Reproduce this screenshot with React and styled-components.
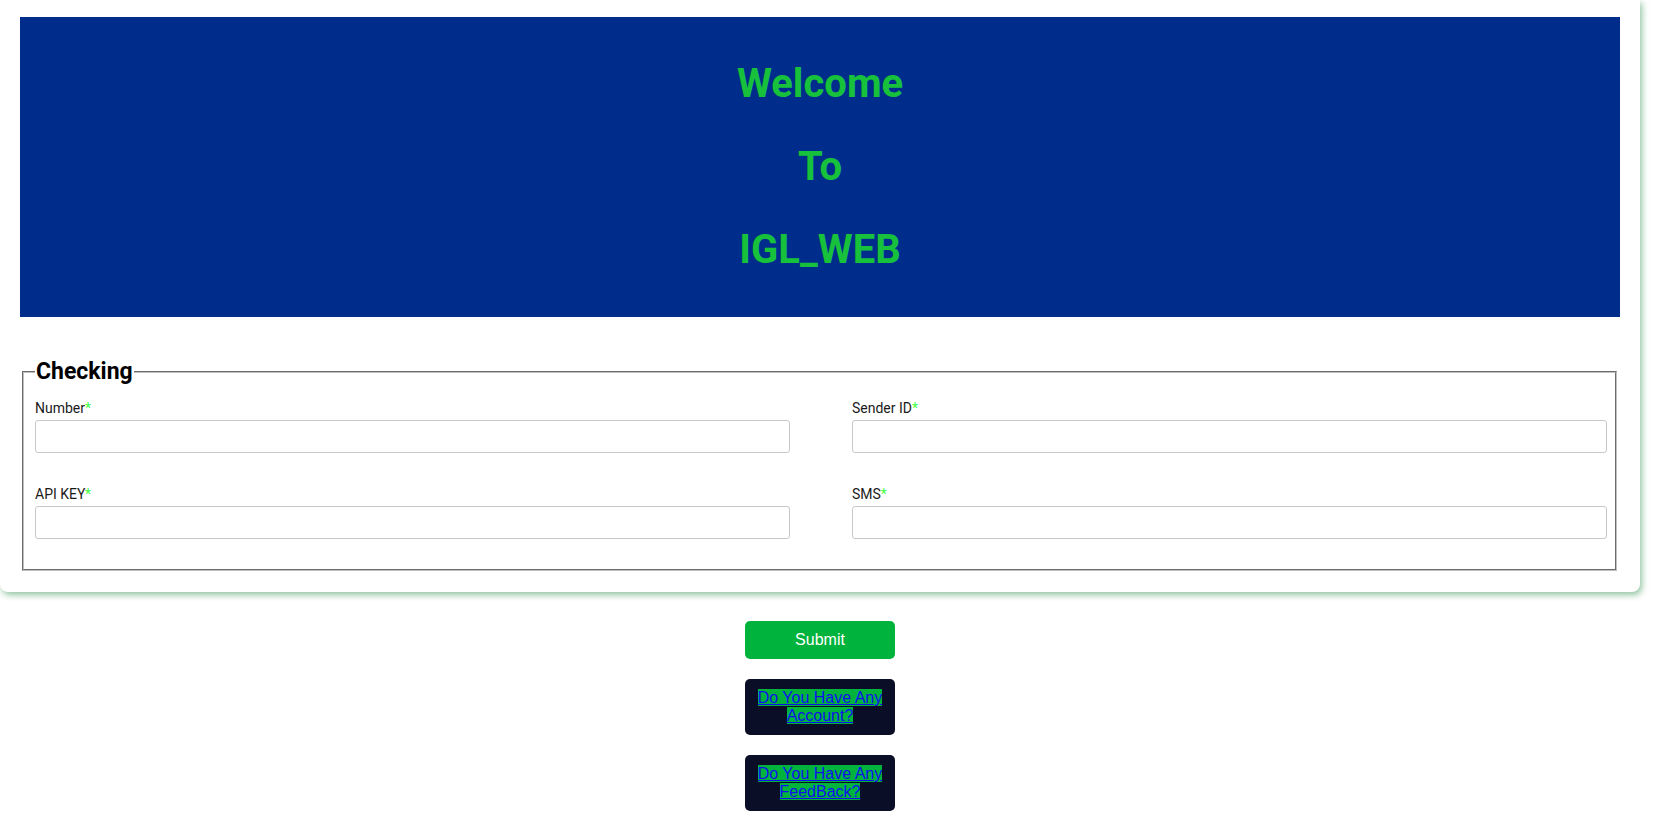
import React from "react";
import styled, { createGlobalStyle } from "styled-components";

const Global = createGlobalStyle`
  html, body { margin: 0; padding: 0; background: #ffffff; }
  body { font-family: Roboto, "Liberation Sans", Arial, sans-serif; }
  * { box-sizing: border-box; }
`;

const Page = styled.div`
  width: 1640px;
  display: flex;
  flex-direction: column;
  align-items: stretch;
  padding-bottom: 9px;
`;

const Card = styled.div`
  background: #ffffff;
  border-radius: 0 0 8px 8px;
  box-shadow: 2px 3px 6px rgba(40, 140, 70, 0.5);
  padding: 17px 20px 21px 20px;
  display: flex;
  flex-direction: column;
  gap: 42px;
`;

const Banner = styled.div`
  background: #002d8c;
  height: 300px;
  display: flex;
  flex-direction: column;
  align-items: center;
  justify-content: center;
  gap: 35px;
`;

const BannerLine = styled.h1`
  margin: 0;
  font-family: Roboto, sans-serif;
  font-weight: 700;
  font-size: 40px;
  line-height: 48px;
  color: #17c13c;
`;

const Fieldset = styled.fieldset`
  margin: 0 3px 0 2px;
  border: 2px groove #c0c0c0;
  padding: 13px 8px 30px 11px;
  min-width: 0;
`;

const Legend = styled.legend`
  font-family: Roboto, sans-serif;
  font-weight: 700;
  font-size: 23px;
  line-height: 26px;
  color: #000000;
  padding: 0 1px;
  margin-left: 0;
`;

const FieldGrid = styled.div`
  display: grid;
  grid-template-columns: 1fr 1fr;
  column-gap: 62px;
  row-gap: 31px;
`;

const Field = styled.div`
  display: flex;
  flex-direction: column;
  gap: 2px;
`;

const Label = styled.label`
  font-family: Roboto, sans-serif;
  font-size: 14px;
  line-height: 20px;
  color: #1a1a1a;
`;

const Star = styled.span`
  color: #44ff44;
`;

const Input = styled.input`
  height: 33px;
  width: 100%;
  border: 1px solid #c8c8c8;
  border-radius: 3px;
  padding: 4px 8px;
  font-family: Roboto, sans-serif;
  font-size: 14px;
  background: #ffffff;
  outline: none;
`;

const Actions = styled.div`
  display: flex;
  flex-direction: column;
  align-items: center;
  gap: 20px;
  margin-top: 29px;
`;

const SubmitButton = styled.button`
  width: 150px;
  height: 38px;
  border: none;
  border-radius: 5px;
  background: #00b33c;
  color: #ffffff;
  font-family: "Liberation Sans", Arial, sans-serif;
  font-size: 16px;
  cursor: pointer;
`;

const LinkBox = styled.div`
  width: 150px;
  border-radius: 5px;
  background: #0a0e27;
  padding: 10px 10px;
  text-align: center;
  font-family: "Liberation Sans", Arial, sans-serif;
  font-size: 16px;
  line-height: 18px;
`;

const Link = styled.a`
  color: #1010ee;
  background: #00b33c;
  text-decoration: underline;
`;

const fields = [
  { id: "number", label: "Number" },
  { id: "sender", label: "Sender ID" },
  { id: "apikey", label: "API KEY" },
  { id: "sms", label: "SMS" },
];

export default function App() {
  return (
    <>
      <Global />
      <Page>
        <Card>
          <Banner>
            <BannerLine>Welcome</BannerLine>
            <BannerLine>To</BannerLine>
            <BannerLine>IGL_WEB</BannerLine>
          </Banner>
          <Fieldset>
            <Legend>Checking</Legend>
            <FieldGrid>
              {fields.map((f) => (
                <Field key={f.id}>
                  <Label htmlFor={f.id}>
                    {f.label}
                    <Star>*</Star>
                  </Label>
                  <Input id={f.id} type="text" />
                </Field>
              ))}
            </FieldGrid>
          </Fieldset>
        </Card>
        <Actions>
          <SubmitButton type="button">Submit</SubmitButton>
          <LinkBox>
            <Link href="#account">Do You Have Any Account?</Link>
          </LinkBox>
          <LinkBox>
            <Link href="#feedback">Do You Have Any FeedBack?</Link>
          </LinkBox>
        </Actions>
      </Page>
    </>
  );
}
